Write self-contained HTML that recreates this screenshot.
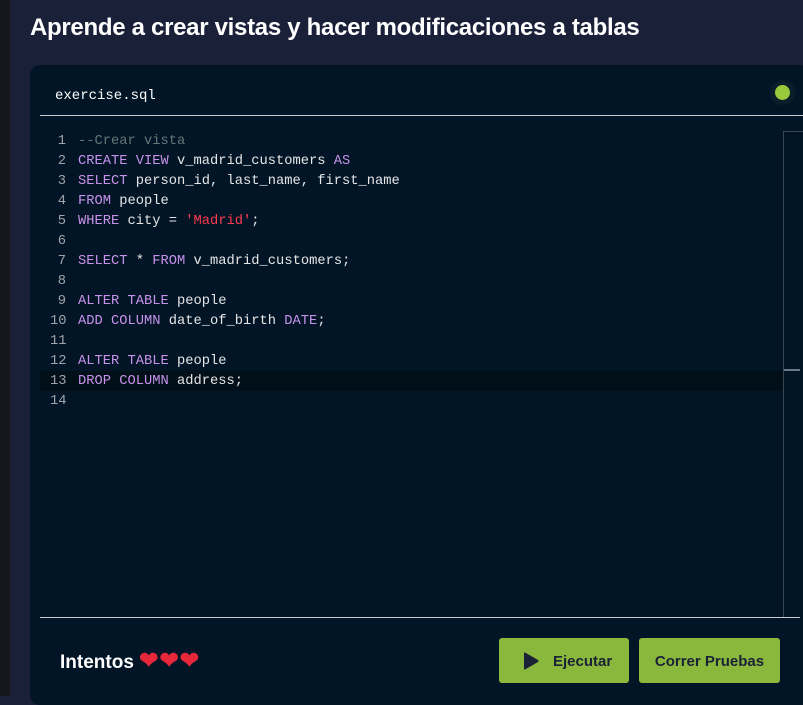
<!DOCTYPE html>
<html><head><meta charset="utf-8"><style>
*{margin:0;padding:0;box-sizing:border-box}
body{width:803px;height:696px;overflow:hidden;background:#1a2038;font-family:"Liberation Sans",sans-serif;position:relative}
.strip{position:absolute;left:0;top:0;width:10px;height:696px;background:#15171d}
h1{position:absolute;left:30px;top:14px;color:#fff;font-size:24px;font-weight:bold;letter-spacing:-0.3px}
.card{position:absolute;left:30px;top:65px;width:780px;height:640px;background:#021526;border-radius:10px}
.fname{position:absolute;left:55px;top:88px;color:#fff;font-family:"Liberation Mono",monospace;font-size:14px}
.dot{position:absolute;left:775px;top:85px;width:15px;height:15px;border-radius:50%;background:#98c93c;box-shadow:0 0 0 5px #0a1e2a}
.hl{position:absolute;left:40px;top:115px;width:763px;height:1px;background:#c8cdd2}
.hl2{position:absolute;left:40px;top:617px;width:760px;height:1px;background:#c8cdd2}
.vs{position:absolute;left:783px;top:131px;width:1px;height:486px;background:#3a4654}
.vs2{position:absolute;left:783px;top:131px;width:20px;height:1px;background:#3a4654}
.cur{position:absolute;left:40px;top:371px;width:743px;height:20px;background:#010f19}
.thumb{position:absolute;left:784px;top:369px;width:16px;height:2px;background:#6a7a8a}
.code{position:absolute;left:0;top:132px;font-family:"Liberation Mono",monospace;font-size:13.75px;line-height:20px;color:#e6e6e6;white-space:pre}
.code>div{height:20px}
.ln{position:absolute;left:50px;width:16px;text-align:right;color:#a0a4aa}
.tx{position:absolute;left:78px}
.k{color:#c792ea}.c{color:#637777}.s{color:#ff3b4e}
.foot{position:absolute;left:60px;top:647px;color:#fff;font-size:19px;font-weight:bold}
.foot span{color:#e8283a;font-size:23px;position:relative;top:0px;letter-spacing:1px}
.btn{position:absolute;top:638px;height:45px;background:#8ab83d;border-radius:3px;color:#1a2236;font-weight:bold;font-size:15px;line-height:47px}
</style></head><body>
<div class="strip"></div>
<h1>Aprende a crear vistas y hacer modificaciones a tablas</h1>
<div class="card"></div>
<div class="fname">exercise.sql</div>
<div class="dot"></div>
<div class="hl"></div>
<div class="cur"></div>
<div class="vs"></div><div class="vs2"></div><div class="thumb"></div>
<div class="code">
<div class="ln" style="top:0">1</div><div class="tx" style="top:0"><span class="c">--Crear vista</span></div>
<div class="ln" style="top:20px">2</div><div class="tx" style="top:20px"><span class="k">CREATE VIEW</span> v_madrid_customers <span class="k">AS</span></div>
<div class="ln" style="top:40px">3</div><div class="tx" style="top:40px"><span class="k">SELECT</span> person_id, last_name, first_name</div>
<div class="ln" style="top:60px">4</div><div class="tx" style="top:60px"><span class="k">FROM</span> people</div>
<div class="ln" style="top:80px">5</div><div class="tx" style="top:80px"><span class="k">WHERE</span> city = <span class="s">'Madrid'</span>;</div>
<div class="ln" style="top:100px">6</div>
<div class="ln" style="top:120px">7</div><div class="tx" style="top:120px"><span class="k">SELECT</span> * <span class="k">FROM</span> v_madrid_customers;</div>
<div class="ln" style="top:140px">8</div>
<div class="ln" style="top:160px">9</div><div class="tx" style="top:160px"><span class="k">ALTER TABLE</span> people</div>
<div class="ln" style="top:180px">10</div><div class="tx" style="top:180px"><span class="k">ADD COLUMN</span> date_of_birth <span class="k">DATE</span>;</div>
<div class="ln" style="top:200px">11</div>
<div class="ln" style="top:220px">12</div><div class="tx" style="top:220px"><span class="k">ALTER TABLE</span> people</div>
<div class="ln" style="top:240px">13</div><div class="tx" style="top:240px"><span class="k">DROP COLUMN</span> address;</div>
<div class="ln" style="top:260px">14</div>
</div>
<div class="hl2"></div>
<div class="foot">Intentos <span>❤❤❤</span></div>
<div class="btn" style="left:499px;width:130px"><svg style="position:absolute;left:24px;top:14px" width="16" height="18" viewBox="0 0 16 18"><path d="M1 1.5 Q1 0 2.5 0.8 L15 8 Q16 9 15 10 L2.5 17.2 Q1 18 1 16.5Z" fill="#1a2236"/></svg><span style="position:absolute;left:54px">Ejecutar</span></div>
<div class="btn" style="left:639px;width:141px;text-align:center">Correr Pruebas</div>
</body></html>
